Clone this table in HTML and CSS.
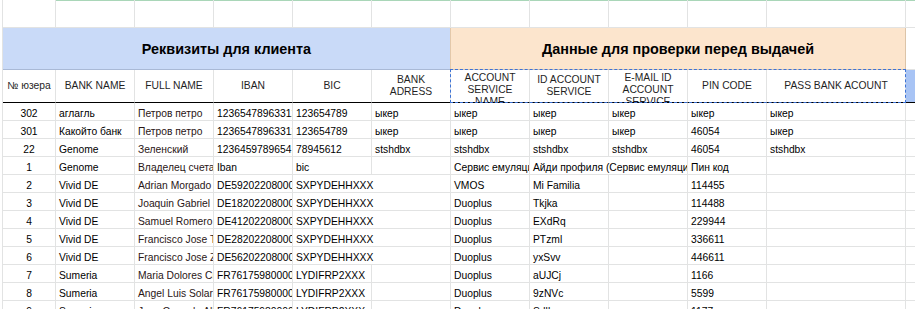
FILE: index.html
```html
<!DOCTYPE html>
<html lang="ru">
<head>
<meta charset="utf-8">
<title>Таблица</title>
<link rel="stylesheet" href="styles.css">
</head>
<body>
<div class="sheet">
  <div class="c tr"></div><div class="c tr g"></div><div class="c tr g"></div><div class="c tr g"></div><div class="c tr g"></div><div class="c tr g"></div><div class="c tr g"></div><div class="c tr g"></div><div class="c tr g"></div><div class="c tr g"></div><div class="c tr g"></div><div class="c tr g"></div>

  <div class="c band blue">Реквизиты для клиента</div>
  <div class="c band orange">Данные для проверки перед выдачей</div>
  <div class="c bandpad"></div>

  <div class="c h">№ юзера</div>
  <div class="c h">BANK NAME</div>
  <div class="c h">FULL NAME</div>
  <div class="c h">IBAN</div>
  <div class="c h">BIC</div>
  <div class="c h">BANK<br>ADRESS</div>
  <div class="c h top">ACCOUNT<br>SERVICE<br>NAME</div>
  <div class="c h">ID ACCOUNT<br>SERVICE</div>
  <div class="c h top">E-MAIL ID<br>ACCOUNT<br>SERVICE</div>
  <div class="c h">PIN CODE</div>
  <div class="c h">PASS BANK ACOUNT</div>
  <div class="c h sel"></div>

  <div class="c d n">302</div><div class="c d">аглагль</div><div class="c d nm">Петров петро</div><div class="c d">123654789633121</div><div class="c d">123654789</div><div class="c d">ыкер</div><div class="c d">ыкер</div><div class="c d">ыкер</div><div class="c d">ыкер</div><div class="c d">ыкер</div><div class="c d">ыкер</div><div class="c d"></div>

  <div class="c d n">301</div><div class="c d">Какойто банк</div><div class="c d nm">Петров петро</div><div class="c d">123654789633121</div><div class="c d">123654789</div><div class="c d">ыкер</div><div class="c d">ыкер</div><div class="c d">ыкер</div><div class="c d">ыкер</div><div class="c d">46054</div><div class="c d">ыкер</div><div class="c d"></div>

  <div class="c d n">22</div><div class="c d">Genome</div><div class="c d nm">Зеленский</div><div class="c d">12364597896541</div><div class="c d">78945612</div><div class="c d">stshdbx</div><div class="c d">stshdbx</div><div class="c d">stshdbx</div><div class="c d">stshdbx</div><div class="c d">46054</div><div class="c d">stshdbx</div><div class="c d"></div>

  <div class="c d n">1</div><div class="c d">Genome</div><div class="c d nm">Владелец счета</div><div class="c d">Iban</div><div class="c d">bic</div><div class="c d"></div><div class="c d">Сервис емуляции</div><div class="c d s2">Айди профиля (Сервис емуляции)</div><div class="c d">Пин код</div><div class="c d"></div><div class="c d"></div>

  <div class="c d n">2</div><div class="c d">Vivid DE</div><div class="c d nm">Adrian Morgado</div><div class="c d">DE59202208000012</div><div class="c d s2">SXPYDEHHXXX</div><div class="c d">VMOS</div><div class="c d">Mi Familia</div><div class="c d"></div><div class="c d">114455</div><div class="c d"></div><div class="c d"></div>

  <div class="c d n">3</div><div class="c d">Vivid DE</div><div class="c d nm">Joaquin Gabriel</div><div class="c d">DE18202208000012</div><div class="c d s2">SXPYDEHHXXX</div><div class="c d">Duoplus</div><div class="c d">Tkjka</div><div class="c d"></div><div class="c d">114488</div><div class="c d"></div><div class="c d"></div>

  <div class="c d n">4</div><div class="c d">Vivid DE</div><div class="c d nm">Samuel Romero</div><div class="c d">DE41202208000012</div><div class="c d s2">SXPYDEHHXXX</div><div class="c d">Duoplus</div><div class="c d">EXdRq</div><div class="c d"></div><div class="c d">229944</div><div class="c d"></div><div class="c d"></div>

  <div class="c d n">5</div><div class="c d">Vivid DE</div><div class="c d nm">Francisco Jose Torres</div><div class="c d">DE28202208000012</div><div class="c d s2">SXPYDEHHXXX</div><div class="c d">Duoplus</div><div class="c d">PTzml</div><div class="c d"></div><div class="c d">336611</div><div class="c d"></div><div class="c d"></div>

  <div class="c d n">6</div><div class="c d">Vivid DE</div><div class="c d nm">Francisco Jose Zapata</div><div class="c d">DE56202208000012</div><div class="c d s2">SXPYDEHHXXX</div><div class="c d">Duoplus</div><div class="c d">yxSvv</div><div class="c d"></div><div class="c d">446611</div><div class="c d"></div><div class="c d"></div>

  <div class="c d n">7</div><div class="c d">Sumeria</div><div class="c d nm">Maria Dolores Cruz</div><div class="c d">FR76175980000012</div><div class="c d">LYDIFRP2XXX</div><div class="c d"></div><div class="c d">Duoplus</div><div class="c d">aUJCj</div><div class="c d"></div><div class="c d">1166</div><div class="c d"></div><div class="c d"></div>

  <div class="c d n">8</div><div class="c d">Sumeria</div><div class="c d nm">Angel Luis Solar</div><div class="c d">FR76175980000012</div><div class="c d">LYDIFRP2XXX</div><div class="c d"></div><div class="c d">Duoplus</div><div class="c d">9zNVc</div><div class="c d"></div><div class="c d">5599</div><div class="c d"></div><div class="c d"></div>

  <div class="c d n">9</div><div class="c d">Sumeria</div><div class="c d nm">Jose Gonzalo Alba</div><div class="c d">FR76175980000012</div><div class="c d">LYDIFRP2XXX</div><div class="c d"></div><div class="c d">Duoplus</div><div class="c d">Sdlkm</div><div class="c d"></div><div class="c d">1177</div><div class="c d"></div><div class="c d"></div>

  <div class="selection"></div>
</div>
</body>
</html>
```
FILE: styles.css
```css
html, body {
  margin: 0;
  padding: 0;
  background: #ffffff;
  overflow: hidden;
}

body {
  width: 915px;
  height: 309px;
  font-family: "Liberation Sans", Arial, sans-serif;
  color: #000;
}

.sheet {
  position: relative;
  display: grid;
  grid-template-columns: 53px repeat(9, 79px) 139px 10px;
  grid-template-rows: 28px 42px 33px repeat(12, 18px);
  margin-left: 2px;
  border-left: 1px solid #e2e3e3;
  width: 913px;
}

.c {
  box-sizing: border-box;
  border-right: 1px solid #e2e3e3;
  border-bottom: 1px solid #e2e3e3;
  overflow: hidden;
  white-space: nowrap;
  min-width: 0;
}

.tr.g {
  box-shadow: inset 0 1px 0 #a9d6b8;
}

.band {
  display: flex;
  align-items: center;
  justify-content: center;
  font-size: 14.4px;
  font-weight: bold;
  padding-top: 1px;
}

.blue {
  grid-column: span 6;
  background: #c9daf8;
  border-bottom-color: #a9b9d6;
  border-right-color: #e3c8aa;
}

.orange {
  grid-column: span 5;
  background: #fce5cd;
  border-bottom-color: #dcc6ad;
  border-right-color: #dcc4a8;
}

.h {
  display: flex;
  align-items: center;
  justify-content: center;
  text-align: center;
  font-size: 10.3px;
  line-height: 12px;
  color: #1f1f1f;
  border-bottom-color: #000;
}

.h.top {
  align-items: flex-start;
  padding-top: 2px;
}

.h.sel {
  background: #a8c4f5;
}

.d {
  display: flex;
  align-items: flex-end;
  font-size: 10.3px;
  line-height: 12px;
  padding: 0 2px 0 3px;
}

.d.n {
  justify-content: center;
  padding: 0;
}

.d.nm {
  color: #2a1616;
}

.s2 {
  grid-column: span 2;
}

.selection {
  position: absolute;
  left: 447px;
  top: 69px;
  width: 456px;
  height: 34px;
  box-sizing: border-box;
  border: 1px dashed #3d73d6;
  pointer-events: none;
}
```
